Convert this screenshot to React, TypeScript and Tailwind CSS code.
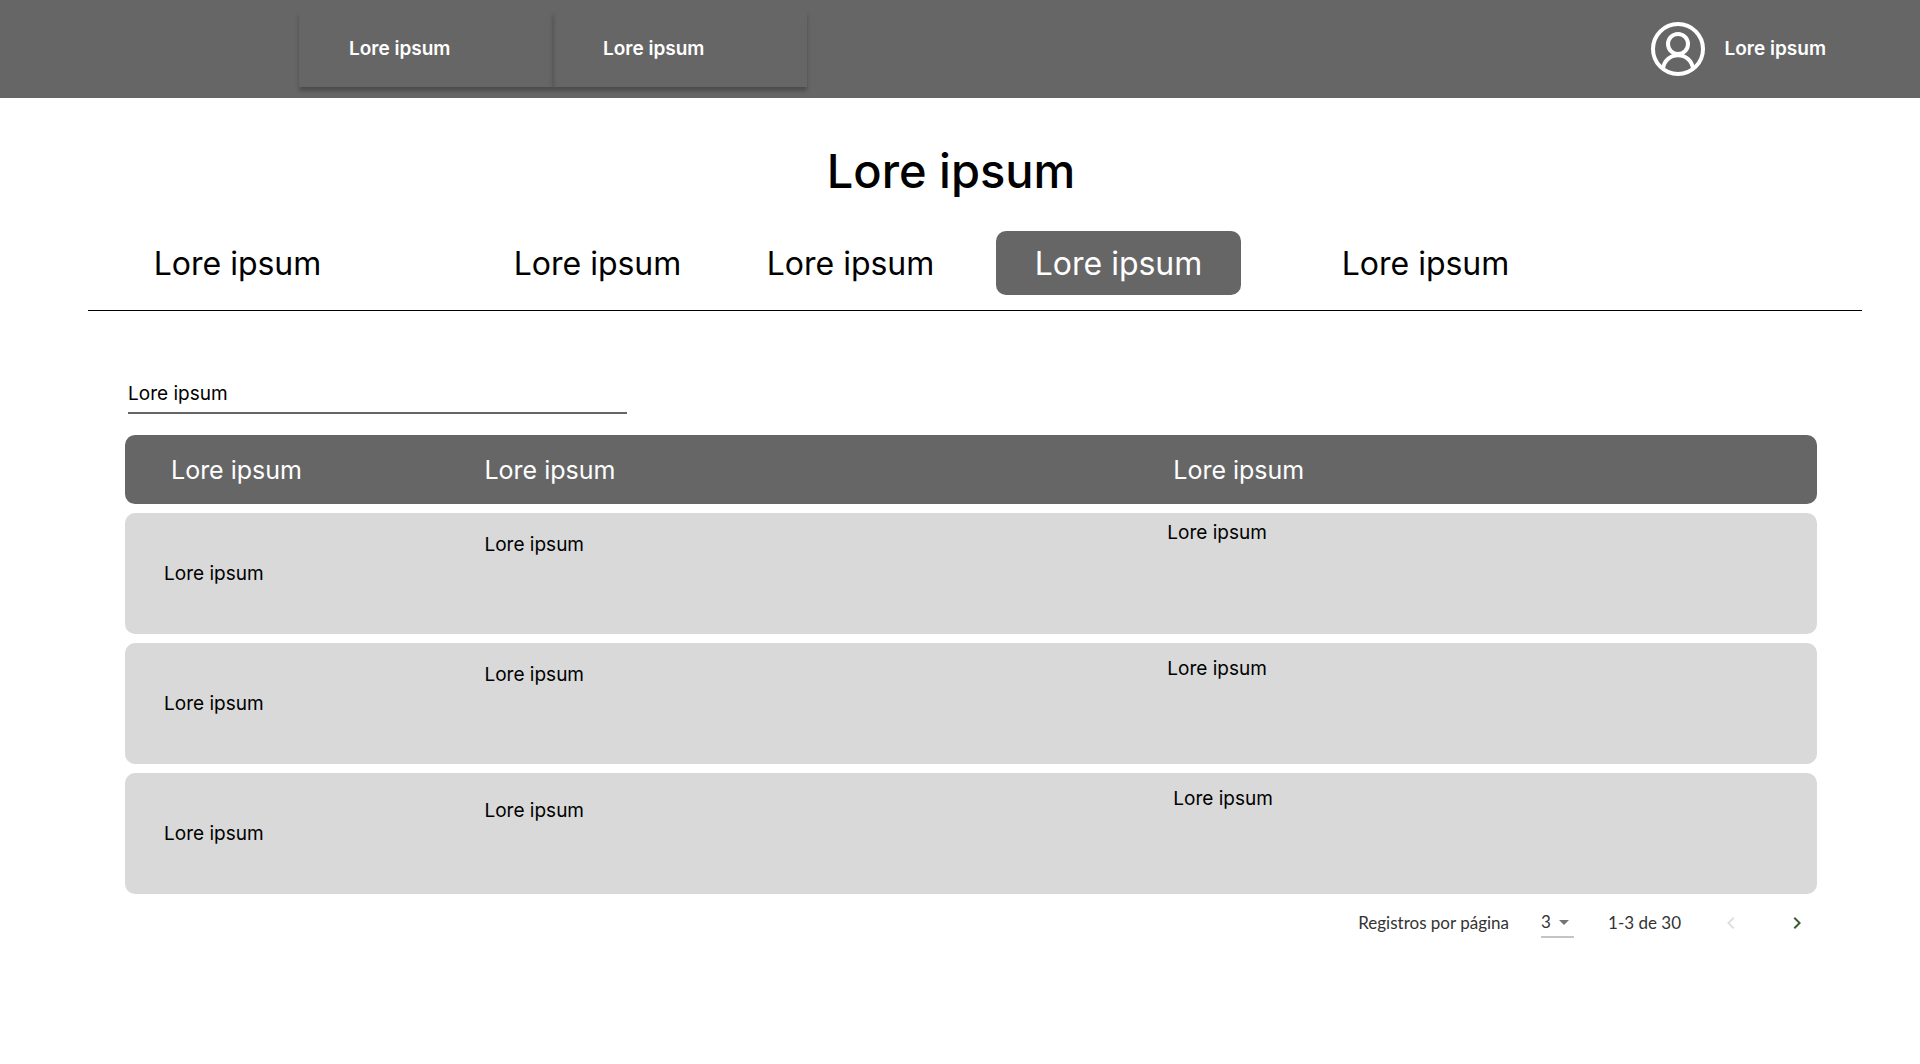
import React, { useState } from "react";

const label = "Lore ipsum";

const tabs = [0, 1, 2, 3, 4];

const rows = [
  { second: "pt-5", third: "pt-2 pl-11" },
  { second: "pt-5", third: "pt-3.5 pl-11" },
  { second: "pt-[26px]", third: "pt-3.5 pl-[50px]" },
];

function UserIcon() {
  return (
    <svg viewBox="0 0 54 54" className="size-[54px]" fill="none" stroke="currentColor" strokeWidth="4" aria-hidden="true">
      <circle cx="27" cy="27" r="25" />
      <circle cx="27" cy="22" r="10" />
      <path d="M12 46.500 A15.100 15.100 0 0 1 42 46.500" />
    </svg>
  );
}

function Header() {
  return (
    <header className="flex h-[98px] items-center justify-between bg-[#666666] pr-[94px] pl-[299px] text-[19px] font-semibold text-white">
      <nav className="flex">
        {[0, 1].map((i) => (
          <a
            key={i}
            href="#"
            className="flex h-[76px] w-[254px] items-center pl-[50px] shadow-[0_4px_4px_rgba(0,0,0,0.25)]"
          >
            {label}
          </a>
        ))}
      </nav>
      <button type="button" className="flex items-center gap-5">
        <UserIcon />
        {label}
      </button>
    </header>
  );
}

function Tabs() {
  const [active, setActive] = useState(3);
  return (
    <nav className="mr-[58px] ml-[88px] grid grid-cols-[360fr_253fr_268fr_307fr_559fr] border-b border-black pb-[15px] pl-[27px]">
      {tabs.map((i) => (
        <button
          key={i}
          type="button"
          onClick={() => setActive(i)}
          className={
            i === active
              ? "h-16 w-[245px] rounded-[10px] bg-[#666666] pt-0.5 text-[32px] text-white"
              : "h-16 w-[245px] rounded-[10px] pt-0.5 text-[32px] text-black"
          }
        >
          {label}
        </button>
      ))}
    </nav>
  );
}

function Pagination() {
  return (
    <footer className="flex h-10 items-center justify-end pr-2 font-[Lato,sans-serif] text-[17px] text-[#333333]">
      <label htmlFor="page-size">Registros por página</label>
      <div className="relative ml-8 flex items-center border-b-2 border-[#c4c4c4]">
        <select id="page-size" defaultValue="3" className="h-7 w-[33px] appearance-none bg-transparent outline-none">
          <option>3</option>
          <option>6</option>
          <option>9</option>
        </select>
        <svg viewBox="0 0 10 5" className="pointer-events-none absolute right-[5px] h-[5px] w-[10px]" fill="#757575" aria-hidden="true">
          <path d="M0 0h10L5 5z" />
        </svg>
      </div>
      <span className="ml-[34px]">1-3 de 30</span>
      <button type="button" disabled aria-label="Página anterior" className="ml-[38px] text-[#dde1db]">
        <svg viewBox="0 0 24 24" className="size-6" fill="currentColor" aria-hidden="true">
          <path d="M15.410 7.410 14 6l-6 6 6 6 1.410-1.410L10.830 12z" />
        </svg>
      </button>
      <button type="button" aria-label="Página siguiente" className="ml-[42px] text-[#3d5a33]">
        <svg viewBox="0 0 24 24" className="size-6" fill="currentColor" aria-hidden="true">
          <path d="M10 6 8.590 7.410 13.170 12l-4.580 4.590L10 18l6-6z" />
        </svg>
      </button>
    </footer>
  );
}

export default function App() {
  return (
    <div className="min-h-screen bg-white font-[Inter,sans-serif] text-black">
      <Header />
      <h1 className="pt-[43px] pr-[18px] pb-[30px] text-center text-[47px] leading-[60px] font-medium">{label}</h1>
      <Tabs />
      <main className="mr-[103px] ml-[125px] pt-[65px]">
        <input
          type="text"
          aria-label={label}
          placeholder={label}
          className="ml-[3px] block h-[38px] w-[499px] border-b-2 border-[#666666] bg-transparent pb-0.5 text-[19px] outline-none placeholder:text-black placeholder:opacity-100"
        />
        <table className="mt-3 w-full table-fixed border-separate border-spacing-x-0 border-spacing-y-[9px] text-left text-[19px] leading-6">
          <thead className="text-[25px] text-white">
            <tr className="h-[69px] bg-[#666666]">
              <th className="w-[19%] rounded-l-[10px] pl-[46px] font-normal">{label}</th>
              <th className="w-[40%] pl-[38px] font-normal">{label}</th>
              <th className="rounded-r-[10px] pl-[50px] font-normal">{label}</th>
            </tr>
          </thead>
          <tbody>
            {rows.map((row, i) => (
              <tr key={i} className="h-[121px] bg-[#d9d9d9]">
                <td className="rounded-l-[10px] pl-[39px] align-middle">{label}</td>
                <td className={`pl-[38px] align-top ${row.second}`}>{label}</td>
                <td className={`rounded-r-[10px] align-top ${row.third}`}>{label}</td>
              </tr>
            ))}
          </tbody>
        </table>
        <Pagination />
      </main>
    </div>
  );
}
